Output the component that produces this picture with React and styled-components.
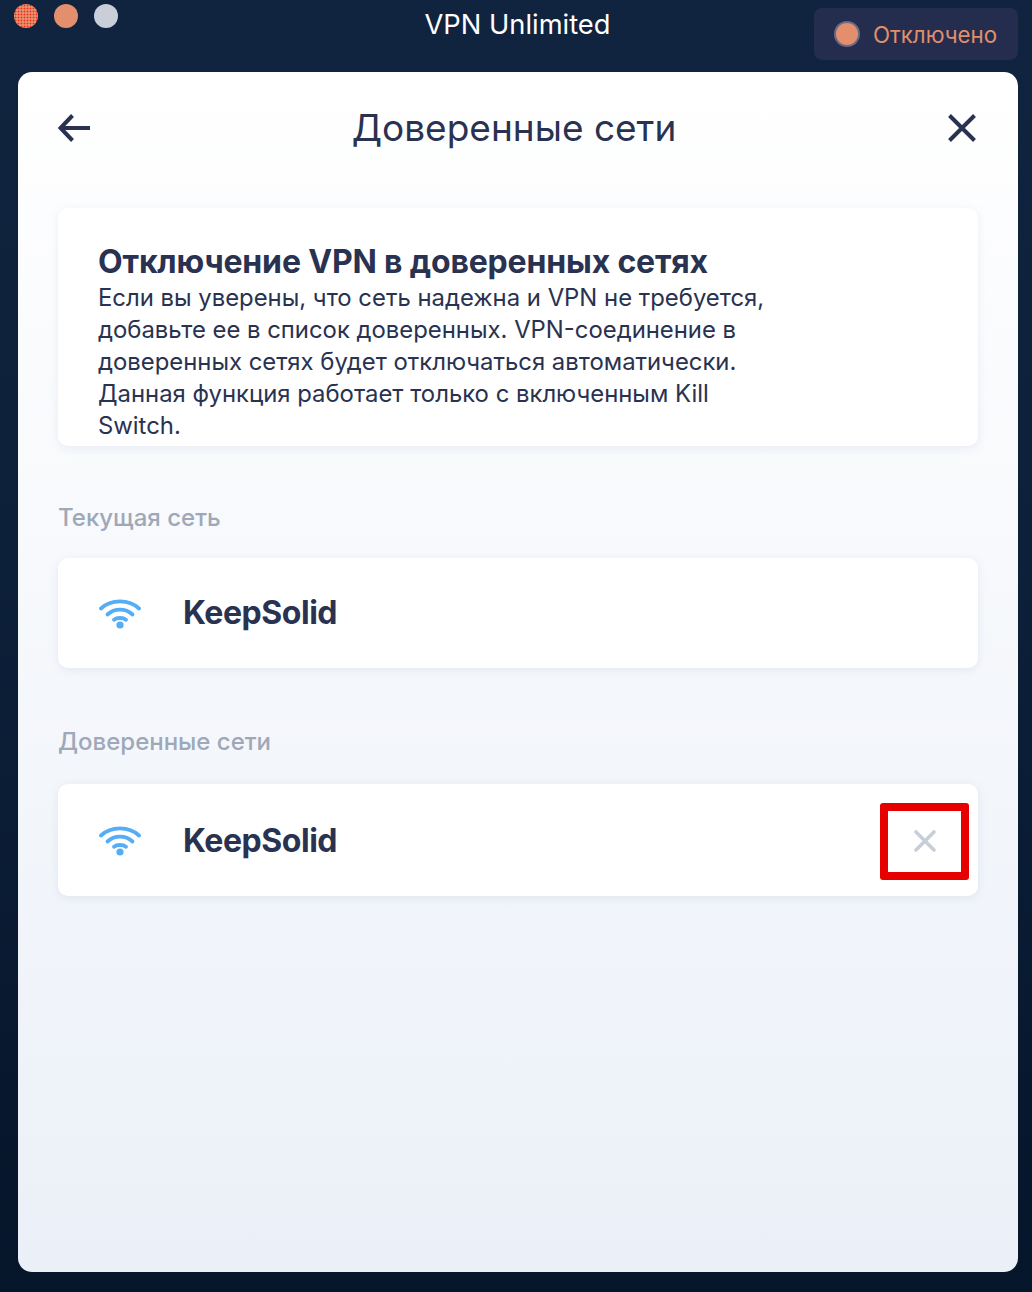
import React from 'react'
import styled, { createGlobalStyle } from 'styled-components'

const GlobalStyle = createGlobalStyle`
	html, body {
		margin: 0;
		padding: 0;
	}
	body {
		font-family: Inter, "Noto Sans", "Liberation Sans", sans-serif;
	}
`

const Window = styled.div`
	width: 1032px;
	height: 1292px;
	box-sizing: border-box;
	display: flex;
	flex-direction: column;
	padding: 0 14px 20px 18px;
	background: linear-gradient(180deg, #11243f 0%, #0d2039 45%, #05152a 100%);
	overflow: hidden;
`

const TitleBar = styled.div`
	height: 72px;
	flex: none;
	display: grid;
	grid-template-columns: 1fr auto 1fr;
	align-items: start;
`

const Lights = styled.div`
	display: flex;
	gap: 16px;
	margin: 4px 0 0 -4px;
`

const Light = styled.span`
	width: 24px;
	height: 24px;
	border-radius: 50%;
	background: ${p => p.color};
`

const CloseLight = styled(Light)`
	background: radial-gradient(circle, #ee2a1c 0.8px, transparent 1.1px) 0 0 / 3px 3px, #e8906c;
`

const AppName = styled.div`
	margin: 8px 0 0 -1px;
	color: #fff;
	font-size: 27.3px;
	line-height: 34px;
	font-weight: 400;
`

const Status = styled.div`
	justify-self: end;
	width: 204px;
	height: 52px;
	box-sizing: border-box;
	margin-top: 8px;
	padding-left: 22px;
	display: flex;
	align-items: center;
	gap: 15px;
	border-radius: 8px;
	background: #252d4f;
	color: #e08f6d;
	font-size: 22.3px;
`

const StatusDot = styled.span`
	width: 22px;
	height: 22px;
	border-radius: 50%;
	background: #e38f6d;
	box-shadow: 0 0 0 2px #6b6a85;
	flex: none;
`

const Panel = styled.div`
	flex: 1;
	position: relative;
	box-sizing: border-box;
	padding: 0 40px;
	border-radius: 14px;
	background: linear-gradient(180deg, #ffffff 0%, #f7f9fc 40%, #ebf0f8 100%);
	color: #293250;
`

const Header = styled.div`
	height: 136px;
	display: grid;
	grid-template-columns: 1fr auto 1fr;
	align-items: center;
	padding-bottom: 25px;
	box-sizing: border-box;
`

const HeaderIcon = styled.svg`
	width: 34px;
	height: 30px;
	justify-self: ${p => p.$end ? 'end' : 'start'};
	stroke: #293250;
	stroke-width: 4;
	fill: none;
`

const Title = styled.h1`
	margin: 1px 8px 0 0;
	font-size: 37px;
	line-height: 46px;
	font-weight: 400;
	color: #293250;
`

const Card = styled.div`
	height: ${p => p.$height}px;
	box-sizing: border-box;
	border-radius: 10px;
	background: #fff;
	box-shadow: 0 2px 10px rgba(120, 140, 180, 0.14);
`

const InfoCard = styled(Card)`
	padding: 35px 40px 0;
	overflow: hidden;
`

const InfoHeading = styled.h2`
	margin: 0 0 1px;
	font-size: 32px;
	line-height: 38px;
	font-weight: 700;
	letter-spacing: -0.17px;
`

const InfoText = styled.p`
	margin: 0;
	width: 680px;
	font-size: 23.87px;
	line-height: 32px;
	font-weight: 400;
`

const SectionLabel = styled.div`
	height: ${p => p.$height}px;
	box-sizing: border-box;
	padding-top: ${p => p.$top}px;
	font-size: 24px;
	line-height: 30px;
	font-weight: 500;
	color: #9ea8b8;
`

const NetworkRow = styled(Card)`
	display: flex;
	align-items: center;
	padding-left: 41px;
	gap: 42px;
`

const WifiIcon = styled.svg`
	width: 42px;
	height: 32px;
	flex: none;
	fill: none;
	stroke: #55adf6;
	stroke-width: 3.8;
	stroke-linecap: round;
`

const NetworkName = styled.div`
	padding-top: ${p => p.$drop || 0}px;
	font-size: 32px;
	line-height: 40px;
	font-weight: 700;
	letter-spacing: -0.45px;
`

const Highlight = styled.div`
	position: absolute;
	left: 862px;
	top: 731px;
	width: 89px;
	height: 77px;
	box-sizing: border-box;
	border: 8px solid #e60000;
	border-radius: 3px;
	display: flex;
	align-items: center;
	justify-content: center;
`

const RemoveIcon = styled.svg`
	width: 24px;
	height: 24px;
	margin-top: -2px;
	stroke: #c8ced8;
	stroke-width: 3.6;
	stroke-linecap: round;
`

const Wifi = () => (
	<WifiIcon viewBox="0 0 42 32">
		<path d="M2 11.5C12 2 30 2 40 11.5" />
		<path d="M8.5 17.5C15.5 11 26.5 11 33.5 17.5" />
		<path d="M15 22.8C18 20.4 24 20.4 27 22.8" />
		<circle cx="21" cy="28" r="3.6" fill="#55adf6" stroke="none" />
	</WifiIcon>
)

export default function App() {
	return (
		<>
			<GlobalStyle />
			<Window>
				<TitleBar>
					<Lights>
						<CloseLight />
						<Light color="#e38f6d" />
						<Light color="#c9ced8" />
					</Lights>
					<AppName>VPN Unlimited</AppName>
					<Status>
						<StatusDot />
						Отключено
					</Status>
				</TitleBar>
				<Panel>
					<Header>
						<HeaderIcon viewBox="0 0 34 30">
							<path d="M32 15H3M14.5 2.5 2.5 15 14.5 27.5" />
						</HeaderIcon>
						<Title>Доверенные сети</Title>
						<HeaderIcon $end viewBox="0 0 34 30">
							<path d="M5.5 2.5 30.5 27.5M30.5 2.5 5.5 27.5" />
						</HeaderIcon>
					</Header>
					<InfoCard $height={238}>
						<InfoHeading>Отключение VPN в доверенных сетях</InfoHeading>
						<InfoText>
							Если вы уверены, что сеть надежна и VPN не требуется, добавьте ее в список доверенных. VPN-соединение в доверенных сетях будет отключаться автоматически. Данная функция работает только с включенным Kill Switch.
						</InfoText>
					</InfoCard>
					<SectionLabel $height={112} $top={57}>Текущая сеть</SectionLabel>
					<NetworkRow $height={110}>
						<Wifi />
						<NetworkName>KeepSolid</NetworkName>
					</NetworkRow>
					<SectionLabel $height={116} $top={59}>Доверенные сети</SectionLabel>
					<NetworkRow $height={112}>
						<Wifi />
						<NetworkName $drop={1}>KeepSolid</NetworkName>
					</NetworkRow>
					<Highlight>
						<RemoveIcon viewBox="0 0 24 24">
							<path d="M3 3 21 21M21 3 3 21" />
						</RemoveIcon>
					</Highlight>
				</Panel>
			</Window>
		</>
	)
}
